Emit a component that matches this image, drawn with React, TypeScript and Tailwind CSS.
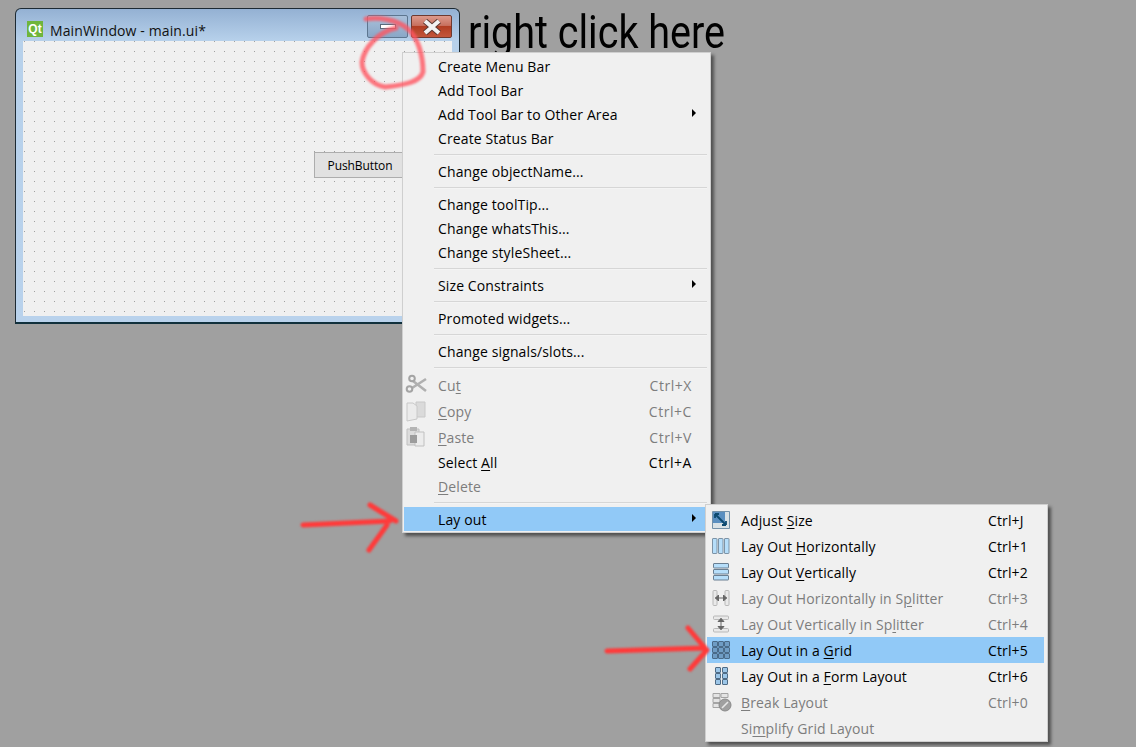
import React from "react";

const font = "font-['Open_Sans','Noto_Sans',sans-serif] tracking-[0.12px]";

function Mn({ children }: { children: React.ReactNode }) {
  return <span className="underline underline-offset-2">{children}</span>;
}

function Scissors() {
  return (
    <svg width="22" height="22" viewBox="0 0 22 22" fill="none">
      <path d="M8 7l13 10M7 14L21 5" stroke="#b0b0b0" strokeWidth="2.6" />
      <circle cx="7" cy="4.5" r="2.8" stroke="#a4a4a4" strokeWidth="2" />
      <circle cx="4.5" cy="15" r="2.8" stroke="#a4a4a4" strokeWidth="2" />
    </svg>
  );
}

function CopyIcon() {
  return (
    <svg width="22" height="22" viewBox="0 0 22 22">
      <path d="M11 2h9v15h-9z" fill="#dadada" stroke="#c8c8c8" />
      <path d="M2 3h6l4 3v13l-10 2z" fill="#ebebeb" stroke="#c8c8c8" />
    </svg>
  );
}

function PasteIcon() {
  return (
    <svg width="22" height="22" viewBox="0 0 22 22">
      <path d="M2 3h12v16H2z" fill="#dcdcdc" stroke="#c0c0c0" />
      <path d="M5 1h7v4H5z" fill="#b4b4b4" />
      <path d="M10 6h9v14h-9z" fill="#ececec" stroke="#c0c0c0" />
      <path d="M5 9h7v8H5z" fill="#9c9c9c" />
    </svg>
  );
}

function AdjustIcon() {
  return (
    <svg width="18" height="18" viewBox="0 0 18 18">
      <path d="M.5.5h17v17H.5z" fill="#d9e2e6" stroke="#7391a8" />
      <path d="M1 1h12v11H1z" fill="#5a8fc0" />
      <path d="M3 3l11 11M3 3h4M3 3v4M14 14h-4M14 14v-4" stroke="#0d4a70" strokeWidth="1.8" fill="none" />
    </svg>
  );
}

function HorizontalIcon() {
  return (
    <svg width="18" height="18" viewBox="0 0 18 18">
      {[1, 7, 13].map((x) => (
        <rect key={x} x={x - 0.5} y="1.5" width="4.5" height="15" rx="0.5" fill="#b6defa" stroke="#7d93a6" />
      ))}
    </svg>
  );
}

function VerticalIcon() {
  return (
    <svg width="18" height="18" viewBox="0 0 18 18">
      {[1, 7, 13].map((y) => (
        <rect key={y} x="1.5" y={y - 0.5} width="15" height="4.5" rx="0.5" fill="#b6defa" stroke="#6a7f92" />
      ))}
    </svg>
  );
}

function HSplitIcon() {
  return (
    <svg width="18" height="18" viewBox="0 0 18 18">
      <rect x="1" y="1.5" width="4" height="15" rx="1" fill="#e9e9e9" stroke="#b8b8b8" />
      <rect x="13" y="1.5" width="4" height="15" rx="1" fill="#e9e9e9" stroke="#b8b8b8" />
      <path d="M3 9h12M3.5 9l3-3v6zM14.5 9l-3-3v6z" stroke="#666" fill="#666" />
    </svg>
  );
}

function VSplitIcon() {
  return (
    <svg width="18" height="18" viewBox="0 0 18 18">
      <rect x="1.5" y="1" width="15" height="3.5" rx="1" fill="#e9e9e9" stroke="#b8b8b8" />
      <rect x="1.5" y="13.5" width="15" height="3.5" rx="1" fill="#e9e9e9" stroke="#b8b8b8" />
      <path d="M9 3v12M9 3.5l-3 3h6zM9 14.5l-3-3h6z" stroke="#666" fill="#666" />
    </svg>
  );
}

function GridIcon() {
  const xs = [0.5, 6.5, 12.5];
  const ys = [0.5, 6.5, 12.5];
  return (
    <svg width="18" height="18" viewBox="0 0 18 18">
      {ys.map((y) =>
        xs.map((x) => (
          <rect key={`${x}-${y}`} x={x} y={y} width="5" height="5" rx="0.5" fill="#6f9cc4" stroke="#4a6a88" />
        )),
      )}
    </svg>
  );
}

function FormIcon() {
  const xs = [3.5, 10.5];
  const ys = [0.5, 6.5, 12.5];
  return (
    <svg width="18" height="18" viewBox="0 0 18 18">
      {ys.map((y) =>
        xs.map((x) => (
          <rect key={`${x}-${y}`} x={x} y={y} width="5" height="5" rx="0.5" fill="#9cc6e8" stroke="#4f6b85" />
        )),
      )}
    </svg>
  );
}

function BreakIcon() {
  return (
    <svg width="20" height="20" viewBox="0 0 20 20">
      <path d="M1 1.5h7v4H1zM9 1.5h7v4H9zM1 6.5h7v4H1zM1 11.5h7v4H1z" fill="#e4e4e4" stroke="#a4a4a4" />
      <circle cx="13" cy="13" r="6" fill="#a0a0a0" stroke="#8a8a8a" />
      <path d="M10 16l6-6" stroke="#e8e8e8" strokeWidth="1.6" />
    </svg>
  );
}

type Row = {
  label: React.ReactNode;
  shortcut?: string;
  icon?: React.ReactNode;
  disabled?: boolean;
  arrow?: boolean;
  active?: boolean;
  tall?: boolean;
};

function Arrow() {
  return <span className="absolute right-[13px] top-1/2 -mt-[5px] h-0 w-0 border-y-4 border-l-4 border-y-transparent border-l-black" />;
}

function Sep() {
  return <div className="mb-[3px] ml-[30px] mr-[2px] mt-[4px] h-[2px] border-t border-[#d6d6d6] bg-[#f4f4f4]" />;
}

function MainRow({ label, shortcut, icon, disabled, arrow, active, tall }: Row) {
  return (
    <div
      className={`relative flex items-center pl-[34px] pr-[17px] ${tall ? "h-[26px]" : "h-[24px]"} ${
        active ? "bg-[#91c9f7]" : ""
      } ${disabled ? "text-[#7d7d7d]" : "text-black"}`}
    >
      {icon && <span className="absolute left-[1px] top-[2px]">{icon}</span>}
      <span>{label}</span>
      {shortcut && <span className="ml-auto tracking-[0.55px]">{shortcut}</span>}
      {arrow && <Arrow />}
    </div>
  );
}

function SubRow({ label, shortcut, icon, disabled, active }: Row) {
  return (
    <div
      className={`flex h-[26px] items-center pl-[5px] pr-[16px] ${active ? "bg-[#91c9f7]" : ""} ${
        disabled ? "text-[#7d7d7d]" : "text-black"
      }`}
    >
      <span className="flex w-[29px] shrink-0 items-center">{icon}</span>
      <span>{label}</span>
      <span className="ml-auto w-[40px]">{shortcut}</span>
    </div>
  );
}

function TitleBar() {
  return (
    <div className="flex h-[32px] items-start pl-[11px] pr-[7px] pt-[6px]">
      <div className="mr-[7px] mt-[6px] flex h-[16px] w-[16px] items-center justify-center bg-[#6fb53c] font-['Liberation_Sans',sans-serif] text-[12px] font-bold leading-none text-white">
        Qt
      </div>
      <span className="mt-[6px] text-[14px] leading-[20px] text-[#111]">MainWindow - main.ui*</span>
      <div className="ml-auto flex gap-[3px]">
        <div className="flex h-[23px] w-[41px] items-center justify-center rounded-[2px] border border-[#5d7690] bg-gradient-to-b from-[#a9c0da] to-[#8aa7c7]">
          <div className="h-[5px] w-[16px] border border-[#596a7c] bg-white" />
        </div>
        <div className="flex h-[23px] w-[41px] items-center justify-center rounded-[2px] border border-[#6e3a30] bg-[linear-gradient(#dd9a8c_0%,#c8705f_45%,#b23d22_50%,#c2563c_100%)]">
          <svg width="20" height="16" viewBox="0 0 20 16">
            <path d="M3 2l14 12M17 2L3 14" stroke="#5c3a33" strokeWidth="6" />
            <path d="M3 2l14 12M17 2L3 14" stroke="#f2f2f2" strokeWidth="4" />
          </svg>
        </div>
      </div>
    </div>
  );
}

export default function App() {
  return (
    <div className={`relative h-[747px] w-[1136px] overflow-hidden bg-[#a0a0a0] text-[14px] ${font}`}>
      {/* designer window */}
      <div className="absolute left-[15px] top-[8px] h-[316px] w-[445px] rounded-t-[6px] border border-[#1d2a33] border-b-2 border-b-[#10303c] bg-[linear-gradient(#94b1d3_0px,#b7d1eb_32px,#b9d2ec_100%)]">
        <TitleBar />
        <div className="relative mx-[7px] h-[275px] bg-[#f0f0f0] bg-[radial-gradient(circle_at_1.5px_0.5px,#a0a0a0_0.5px,transparent_0.8px)] bg-[length:10px_10px]">
          <div className="absolute left-[291px] top-[111px] flex h-[26px] w-[92px] items-center justify-center border border-[#adadad] bg-[#e1e1e1] pt-px text-[12px] tracking-[-0.1px] text-black">
            PushButton
          </div>
        </div>
      </div>

      {/* caption */}
      <div className="absolute left-[468px] top-[4px] origin-left scale-x-[0.86] whitespace-nowrap font-['Roboto',sans-serif] text-[46px] leading-[56px] tracking-normal text-black">
        right click here
      </div>

      {/* context menu */}
      <div className="absolute left-[402px] top-[52px] w-[309px] border border-[#cfcfcf] bg-[#f0f0f0] px-[1px] pb-[1px] pt-[1px] shadow-[3px_3px_3px_rgba(40,40,40,0.65)]">
        <MainRow label="Create Menu Bar" />
        <MainRow label="Add Tool Bar" />
        <MainRow label="Add Tool Bar to Other Area" arrow />
        <MainRow label="Create Status Bar" />
        <Sep />
        <MainRow label="Change objectName..." />
        <Sep />
        <MainRow label="Change toolTip..." />
        <MainRow label="Change whatsThis..." />
        <MainRow label="Change styleSheet..." />
        <Sep />
        <MainRow label="Size Constraints" arrow />
        <Sep />
        <MainRow label="Promoted widgets..." />
        <Sep />
        <MainRow label="Change signals/slots..." />
        <Sep />
        <MainRow tall disabled icon={<Scissors />} label={<>Cu<Mn>t</Mn></>} shortcut="Ctrl+X" />
        <MainRow tall disabled icon={<CopyIcon />} label={<><Mn>C</Mn>opy</>} shortcut="Ctrl+C" />
        <MainRow tall disabled icon={<PasteIcon />} label={<><Mn>P</Mn>aste</>} shortcut="Ctrl+V" />
        <MainRow label={<>Select <Mn>A</Mn>ll</>} shortcut="Ctrl+A" />
        <MainRow disabled label={<><Mn>D</Mn>elete</>} />
        <Sep />
        <MainRow active label="Lay out" arrow />
      </div>

      {/* submenu */}
      <div className="absolute left-[705px] top-[504px] w-[343px] border border-[#cfcfcf] bg-[#f0f0f0] pb-0 pl-[1px] pr-[3px] pt-[2px] shadow-[3px_3px_3px_rgba(40,40,40,0.65)]">
        <SubRow icon={<AdjustIcon />} label={<>Adjust <Mn>S</Mn>ize</>} shortcut="Ctrl+J" />
        <SubRow icon={<HorizontalIcon />} label={<>Lay Out <Mn>H</Mn>orizontally</>} shortcut="Ctrl+1" />
        <SubRow icon={<VerticalIcon />} label={<>Lay Out <Mn>V</Mn>ertically</>} shortcut="Ctrl+2" />
        <SubRow disabled icon={<HSplitIcon />} label={<>Lay Out Horizontally in S<Mn>p</Mn>litter</>} shortcut="Ctrl+3" />
        <SubRow disabled icon={<VSplitIcon />} label={<>Lay Out Vertically in Sp<Mn>l</Mn>itter</>} shortcut="Ctrl+4" />
        <SubRow active icon={<GridIcon />} label={<>Lay Out in a <Mn>G</Mn>rid</>} shortcut="Ctrl+5" />
        <SubRow icon={<FormIcon />} label={<>Lay Out in a <Mn>F</Mn>orm Layout</>} shortcut="Ctrl+6" />
        <SubRow disabled icon={<BreakIcon />} label={<><Mn>B</Mn>reak Layout</>} shortcut="Ctrl+0" />
        <SubRow disabled label={<>Si<Mn>m</Mn>plify Grid Layout</>} />
      </div>

      {/* red marker scribbles */}
      <svg className="pointer-events-none absolute inset-0 blur-[1px]" width="1136" height="747" fill="none" stroke="#ff3a3a" strokeWidth="5" strokeLinecap="round" strokeLinejoin="round">
        <path d="M366 19C378 17 396 19 408 29C418 38 423 55 423 72C420 82 405 85 385 87C372 85 362 73 362 62C364 48 378 32 396 28" stroke="#ff5560" strokeOpacity="0.8" />
        <path d="M303 525L390 521M370 505L396 521M369 550L387 525" />
        <path d="M607 651L705 648M688 628L705 648M690 669L707 650" />
      </svg>
    </div>
  );
}
